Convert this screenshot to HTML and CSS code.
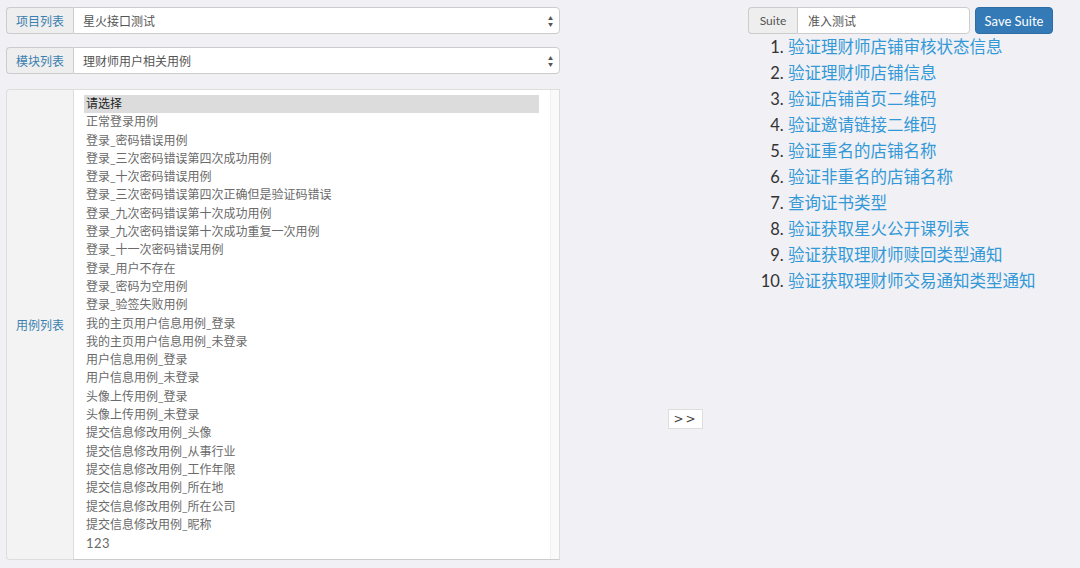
FILE: index.html
```html
<!DOCTYPE html>
<html lang="zh-CN">
<head>
    <meta charset="UTF-8">
    <meta name="viewport" content="width=device-width, initial-scale=1.0">
    <title>Suite 管理</title>
    <link rel="stylesheet" href="styles.css">
</head>
<body>
    <main class="page">
        <section class="left-panel">
            <div class="input-group">
                <span class="addon">项目列表</span>
                <div class="select-box">
                    <span>星火接口测试</span>
                    <span class="arrows">&#9650;<br>&#9660;</span>
                </div>
            </div>
            <div class="input-group">
                <span class="addon">模块列表</span>
                <div class="select-box">
                    <span>理财师用户相关用例</span>
                    <span class="arrows">&#9650;<br>&#9660;</span>
                </div>
            </div>
            <div class="input-group list-group">
                <span class="addon">用例列表</span>
                <div class="list-box">
                    <ul class="case-list">
                        <li class="selected">请选择</li>
                        <li>正常登录用例</li>
                        <li>登录_密码错误用例</li>
                        <li>登录_三次密码错误第四次成功用例</li>
                        <li>登录_十次密码错误用例</li>
                        <li>登录_三次密码错误第四次正确但是验证码错误</li>
                        <li>登录_九次密码错误第十次成功用例</li>
                        <li>登录_九次密码错误第十次成功重复一次用例</li>
                        <li>登录_十一次密码错误用例</li>
                        <li>登录_用户不存在</li>
                        <li>登录_密码为空用例</li>
                        <li>登录_验签失败用例</li>
                        <li>我的主页用户信息用例_登录</li>
                        <li>我的主页用户信息用例_未登录</li>
                        <li>用户信息用例_登录</li>
                        <li>用户信息用例_未登录</li>
                        <li>头像上传用例_登录</li>
                        <li>头像上传用例_未登录</li>
                        <li>提交信息修改用例_头像</li>
                        <li>提交信息修改用例_从事行业</li>
                        <li>提交信息修改用例_工作年限</li>
                        <li>提交信息修改用例_所在地</li>
                        <li>提交信息修改用例_所在公司</li>
                        <li>提交信息修改用例_昵称</li>
                        <li class="number-item">123</li>
                    </ul>
                    <div class="track"></div>
                </div>
            </div>
        </section>

        <section class="middle">
            <button class="move-button">&gt;&gt;</button>
        </section>

        <section class="right-panel">
            <div class="suite-row">
                <div class="input-group suite-group">
                    <span class="addon">Suite</span>
                    <div class="text-input">准入测试</div>
                </div>
                <button class="save-button">Save Suite</button>
            </div>
            <ol class="suite-list">
                <li><a href="#">验证理财师店铺审核状态信息</a></li>
                <li><a href="#">验证理财师店铺信息</a></li>
                <li><a href="#">验证店铺首页二维码</a></li>
                <li><a href="#">验证邀请链接二维码</a></li>
                <li><a href="#">验证重名的店铺名称</a></li>
                <li><a href="#">验证非重名的店铺名称</a></li>
                <li><a href="#">查询证书类型</a></li>
                <li><a href="#">验证获取星火公开课列表</a></li>
                <li><a href="#">验证获取理财师赎回类型通知</a></li>
                <li><a href="#">验证获取理财师交易通知类型通知</a></li>
            </ol>
        </section>
    </main>
</body>
</html>
```

FILE: styles.css
```css
* {
    box-sizing: border-box;
}

body {
    margin: 0;
    background-color: #f0f0f5;
    font-family: Lato, "Noto Sans CJK SC", sans-serif;
    font-size: 12px;
    color: #555;
}

.page {
    display: flex;
    height: 568px;
    padding-top: 7px;
}

.left-panel {
    width: 554px;
    margin-left: 6px;
    display: flex;
    flex-direction: column;
    gap: 13px;
}

.input-group {
    display: flex;
    height: 27px;
}

.addon {
    display: flex;
    align-items: center;
    justify-content: center;
    width: 67px;
    background-color: #eee;
    border: 1px solid #ccc;
    border-right: none;
    border-radius: 4px 0 0 4px;
    color: #3a7fb0;
}

.select-box {
    flex: 1;
    display: flex;
    align-items: center;
    justify-content: space-between;
    padding: 0 6px 0 9px;
    background-color: #fff;
    border: 1px solid #ccc;
    border-radius: 0 4px 4px 0;
    color: #555;
}

.arrows {
    font-size: 5px;
    line-height: 6px;
    color: #555;
    text-align: center;
}

.list-group {
    height: 471px;
    margin-top: 2px;
}

.list-group .addon {
    background-color: #f3f3f3;
    border-color: #ddd;
    border-radius: 4px 0 0 4px;
}

.list-box {
    flex: 1;
    display: flex;
    background-color: #fff;
    border: 1px solid #ddd;
    border-bottom-color: #ccc;
}

.case-list {
    flex: 1;
    list-style: none;
    margin: 0;
    padding: 5px 11px 0 10px;
}

.case-list li {
    height: 18.3px;
    line-height: 18px;
    padding-left: 2px;
    color: #6a6a6a;
}

.case-list li.selected {
    background-color: #dcdcdc;
    color: #222;
}

.case-list li.number-item {
    font-size: 13px;
    letter-spacing: 0.5px;
}

.track {
    width: 9px;
    border-left: 1px solid #f0f0f0;
    background-color: #fafafa;
}

.middle {
    width: 188px;
    padding-top: 402px;
    padding-left: 108px;
}

.move-button {
    width: 35px;
    height: 20px;
    padding: 0;
    background-color: #fff;
    border: 1px solid #ddd;
    font-family: "DejaVu Sans", sans-serif;
    font-size: 12px;
    letter-spacing: 2px;
    color: #444;
}

.right-panel {
    width: 306px;
}

.suite-row {
    display: flex;
    gap: 5px;
}

.suite-group {
    width: 222px;
}

.suite-group .addon {
    width: 49px;
    color: #555;
}

.text-input {
    flex: 1;
    display: flex;
    align-items: center;
    padding-left: 10px;
    background-color: #fff;
    border: 1px solid #ccc;
    border-radius: 0 4px 4px 0;
    color: #555;
}

.save-button {
    width: 78px;
    height: 27px;
    background-color: #337ab7;
    border: 1px solid #2e6da4;
    border-radius: 4px;
    color: #fff;
    font-family: Lato, sans-serif;
    font-size: 13px;
}

.suite-list {
    margin: 0;
    padding-left: 40px;
    font-size: 16.5px;
    line-height: 26px;
    color: #333;
}

.suite-list a {
    color: #3399d6;
    text-decoration: none;
}
```
